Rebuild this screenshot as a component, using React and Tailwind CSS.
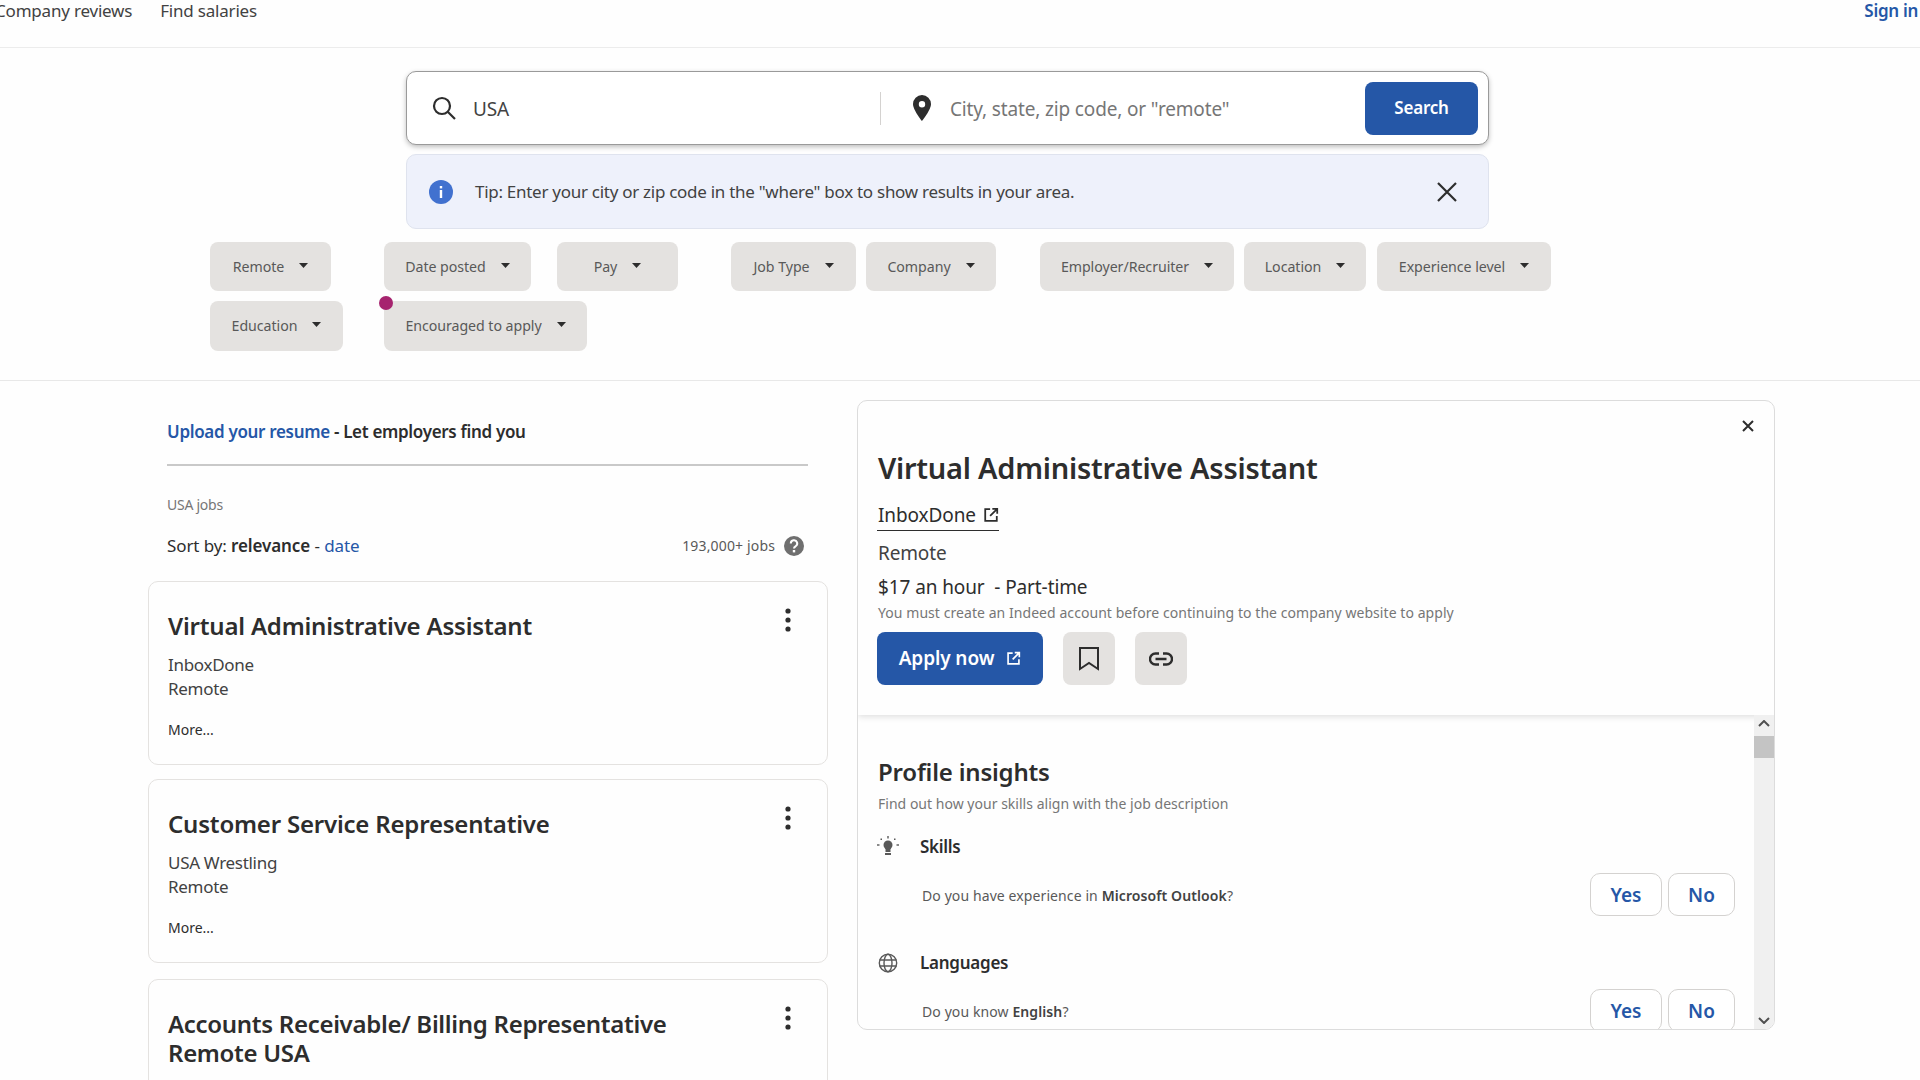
import React from "react";

const Caret = () => (
  <svg width="9" height="5" viewBox="0 0 9 5" className="shrink-0 -mt-[3px]"><path d="M0 0h9L4.5 5z" fill="#2d2d2d" /></svg>
);

const Filter = ({ label, className }) => (
  <button className={`flex items-center justify-center gap-[15px] bg-[#e4e2e0] rounded-[8px] text-[14.2px] text-[#595959] tracking-[-0.05px] ${className}`}>
    <span>{label}</span>
    <Caret />
  </button>
);

const Dots = () => (
  <svg width="8" height="24" viewBox="0 0 8 24" className="shrink-0"><circle cx="4" cy="3" r="2.6" fill="#2d2d2d" /><circle cx="4" cy="12" r="2.6" fill="#2d2d2d" /><circle cx="4" cy="21" r="2.6" fill="#2d2d2d" /></svg>
);

const Card = ({ title, company, more = true, className = "" }) => (
  <div className={`w-[680px] border border-[#e4e2e0] rounded-[10px] shrink-0 px-[19px] pt-[29px] ${className}`}>
    <div className="flex justify-between items-start pr-[16px]">
      <h2 className="text-[24px] leading-[29px] font-semibold text-[#2d2d2d] tracking-[-0.2px] w-[560px]">{title}</h2>
      <div className="-mt-[3px]"><Dots /></div>
    </div>
    {more && (
      <>
        <div className="mt-[13px] text-[17px] leading-[24px] text-[#424242] tracking-[-0.3px]">{company}</div>
        <div className="text-[17px] leading-[24px] text-[#424242] tracking-[-0.3px]">Remote</div>
        <div className="mt-[19px] text-[14px] leading-[20px] text-[#2d2d2d]">More...</div>
      </>
    )}
  </div>
);

const External = ({ size, color, width = 2 }) => (
  <svg width={size} height={size} viewBox="0 0 18 18" fill="none" stroke={color} strokeWidth={width} className="shrink-0">
    <path d="M8 2.5H2.5v13h13V10" />
    <path d="M10.5 2h5.5v5.5M16 2L8 10" />
  </svg>
);

const YesNo = () => (
  <div className="flex gap-[6px] shrink-0">
    <button className="w-[72px] h-[43px] pt-[1px] bg-white border border-[#d4d2d0] rounded-[10px] text-[19px] font-semibold text-[#2557a7]">Yes</button>
    <button className="w-[67px] h-[43px] pt-[1px] bg-white border border-[#d4d2d0] rounded-[10px] text-[19px] font-semibold text-[#2557a7]">No</button>
  </div>
);

export default function App() {
  return (
    <div className="h-screen w-full overflow-hidden bg-[#fefefe] font-['Noto_Sans','Open_Sans',sans-serif]">
      <header className="h-[48px] border-b border-[#ececec] flex justify-between items-start pr-[2px]">
        <nav className="flex gap-[28px] -ml-[5px] text-[17px] leading-[22px] text-[#424242] tracking-[-0.2px]">
          <span>Company reviews</span>
          <span>Find salaries</span>
        </nav>
        <span className="text-[17px] leading-[22px] font-semibold text-[#2557a7] tracking-[-0.3px]">Sign in</span>
      </header>

      <section className="h-[333px] border-b border-[#e8e8e8] pt-[23px]">
        <div className="ml-[406px] w-[1083px] h-[74px] bg-white border border-[#9a9a9a] rounded-[10px] shadow-[0_2px_5px_rgba(0,0,0,0.25)] flex items-center">
          <svg width="28" height="28" viewBox="0 0 28 28" fill="none" stroke="#2d2d2d" strokeWidth="2.2" className="ml-[23px] shrink-0">
            <circle cx="12" cy="12" r="8" /><path d="M18 18l7 7" />
          </svg>
          <span className="ml-[15px] w-[407px] pt-[2px] text-[19px] text-[#424242] tracking-[-0.2px]">USA</span>
          <div className="w-px h-[33px] bg-[#d4d2d0]"></div>
          <svg width="20" height="26" viewBox="0 0 20 26" className="ml-[31px] shrink-0">
            <path fillRule="evenodd" d="M10 0a9 9 0 0 1 9 9c0 6-9 17-9 17S1 15 1 9a9 9 0 0 1 9-9zm0 6a3.2 3.2 0 1 0 0 6.400a3.200 3.200 0 0 0 0-6.400z" fill="#2d2d2d" />
          </svg>
          <span className="ml-[18px] w-[415px] pt-[2px] text-[19px] text-[#767676] tracking-[-0.15px]">City, state, zip code, or "remote"</span>
          <button className="w-[113px] h-[53px] rounded-[8px] bg-[#2557a7] text-white text-[17px] font-semibold tracking-[-0.2px]">Search</button>
        </div>

        <div className="ml-[406px] mt-[9px] w-[1083px] h-[75px] bg-[#eef1fb] border border-[#dfe3ee] rounded-[10px] flex items-center">
          <svg width="24" height="24" viewBox="0 0 24 24" className="ml-[22px] shrink-0">
            <circle cx="12" cy="12" r="12" fill="#4171cf" />
            <rect x="10.800" y="10" width="2.400" height="8" fill="#fff" />
            <rect x="10.800" y="6" width="2.400" height="2.400" fill="#fff" />
          </svg>
          <span className="ml-[22px] w-[962px] text-[17px] text-[#424242] tracking-[-0.28px]">Tip: Enter your city or zip code in the "where" box to show results in your area.</span>
          <svg width="20" height="20" viewBox="0 0 20 20" fill="none" stroke="#2d2d2d" strokeWidth="2.200" className="shrink-0">
            <path d="M1 1l18 18M19 1L1 19" />
          </svg>
        </div>

        <div className="flex mt-[13px] ml-[210px] h-[49px]">
          <Filter label="Remote" className="w-[121px] h-[49px] pt-[1px]" />
          <Filter label="Date posted" className="w-[147px] h-[49px] pt-[1px] ml-[53px]" />
          <Filter label="Pay" className="w-[121px] h-[49px] pt-[1px] ml-[26px]" />
          <Filter label="Job Type" className="w-[125px] h-[49px] pt-[1px] ml-[53px]" />
          <Filter label="Company" className="w-[130px] h-[49px] pt-[1px] ml-[10px]" />
          <Filter label="Employer/Recruiter" className="w-[194px] h-[49px] pt-[1px] ml-[44px]" />
          <Filter label="Location" className="w-[122px] h-[49px] pt-[1px] ml-[10px]" />
          <Filter label="Experience level" className="w-[174px] h-[49px] pt-[1px] ml-[11px]" />
        </div>
        <div className="flex mt-[10px] ml-[210px] h-[50px]">
          <Filter label="Education" className="w-[133px] h-[50px] pb-[1px]" />
          <div className="relative ml-[41px]">
            <Filter label="Encouraged to apply" className="w-[203px] h-[50px] pb-[1px]" />
            <span className="absolute -left-[5px] -top-[5px] w-[14px] h-[14px] rounded-full bg-[#a6246f]"></span>
          </div>
        </div>
      </section>

      <main className="flex items-start">
        <div className="ml-[148px] w-[680px] shrink-0 flex flex-col">
          <div className="ml-[19px] mt-[39px] text-[17px] leading-[24px] font-semibold text-[#2d2d2d] tracking-[-0.32px]">
            <span className="text-[#2557a7]">Upload your resume</span> - Let employers find you
          </div>
          <div className="ml-[19px] mt-[20px] w-[641px] h-[2px] bg-[#c9c9c9]"></div>
          <div className="ml-[19px] mt-[29px] text-[14px] leading-[20px] text-[#767676] tracking-[-0.25px]">USA jobs</div>
          <div className="ml-[19px] w-[641px] mt-[19px] flex items-center justify-between leading-[24px]">
            <div className="text-[17px] text-[#2d2d2d] tracking-[-0.1px]">Sort by: <b className="font-semibold">relevance</b> - <span className="text-[#2557a7]">date</span></div>
            <div className="flex items-center gap-[9px] pr-[4px] text-[14px] text-[#595959] tracking-[0.15px]">
              <span>193,000+ jobs</span>
              <svg width="20" height="20" viewBox="0 0 20 20">
                <circle cx="10" cy="10" r="10" fill="#6f6f6f" />
                <path d="M6.800 7.500a3.200 3.200 0 1 1 4.700 2.800c-1 .6-1.500 1-1.500 2.200" fill="none" stroke="#fff" strokeWidth="2" />
                <rect x="8.800" y="14" width="2.400" height="2.400" fill="#fff" />
              </svg>
            </div>
          </div>
          <Card className="mt-[23px] h-[184px]" title="Virtual Administrative Assistant" company="InboxDone" />
          <Card className="mt-[14px] h-[184px]" title="Customer Service Representative" company="USA Wrestling" />
          <Card className="mt-[16px] h-[140px]" title={<span className="tracking-[-0.3px]">Accounts Receivable/ Billing Representative<br />Remote USA</span>} more={false} />
        </div>

        <aside className="relative ml-[29px] mt-[19px] w-[918px] h-[630px] shrink-0 border border-[#dcdcdc] rounded-[10px] overflow-hidden flex flex-col bg-[#fefefe]">
          <svg width="12" height="12" viewBox="0 0 12 12" fill="none" stroke="#2d2d2d" strokeWidth="2" className="absolute right-[20px] top-[19px]"><path d="M1 1l10 10M11 1L1 11" /></svg>
          <div className="h-[314px] shrink-0 pl-[20px] pr-[19px] pt-[48px] shadow-[0_2px_6px_rgba(0,0,0,0.12)] relative">
            <h1 className="text-[29px] leading-[38px] font-semibold text-[#2d2d2d] tracking-[-0.25px]">Virtual Administrative Assistant</h1>
            <div className="mt-[13px] -ml-px pl-px inline-flex items-center gap-[7px] h-[31px] border-b border-[#2d2d2d] text-[19px] text-[#2d2d2d] tracking-[-0.1px]">
              InboxDone <External size={16} color="#2d2d2d" />
            </div>
            <div className="mt-[9px] text-[19px] leading-[26px] text-[#424242] tracking-[-0.15px]">Remote</div>
            <div className="mt-[8px] text-[19px] leading-[26px] text-[#2d2d2d] tracking-[-0.1px]">$17 an hour &nbsp;- Part-time</div>
            <div className="text-[14px] leading-[26px] text-[#767676] tracking-[0.06px]">You must create an Indeed account before continuing to the company website to apply</div>
            <div className="mt-[6px] -ml-px flex gap-[20px]">
              <button className="w-[166px] h-[53px] rounded-[8px] bg-[#2557a7] text-white text-[19px] font-semibold tracking-[-0.1px] flex items-center justify-center gap-[12px]">
                Apply now <External size={15} color="#fff" />
              </button>
              <button className="w-[52px] h-[53px] rounded-[8px] bg-[#e4e2e0] flex items-center justify-center">
                <svg width="20" height="24" viewBox="0 0 20 24" fill="none" stroke="#2d2d2d" strokeWidth="2"><path d="M1 1h18v21l-9-6-9 6z" /></svg>
              </button>
              <button className="w-[52px] h-[53px] rounded-[8px] bg-[#e4e2e0] flex items-center justify-center">
                <svg width="24" height="14" viewBox="0 0 24 14" fill="none" stroke="#2d2d2d" strokeWidth="2.400"><path d="M10 1.500H6.500a5.500 5.500 0 0 0 0 11H10M14 1.500h3.500a5.500 5.500 0 0 1 0 11H14M6.500 7h11" /></svg>
              </button>
            </div>
          </div>

          <div className="flex flex-1 min-h-0">
            <div className="flex-1 pl-[20px] pr-[19px] overflow-hidden">
              <h2 className="mt-[40px] text-[24px] leading-[34px] font-semibold text-[#2d2d2d] tracking-[-0.2px]">Profile insights</h2>
              <div className="mt-[4px] text-[14px] leading-[22px] text-[#767676] tracking-[0.02px]">Find out how your skills align with the job description</div>
              <div className="mt-[20px] flex items-center h-[24px]">
                <svg width="22" height="22" viewBox="0 0 22 22" className="shrink-0 -mt-[2px] -ml-px" fill="#595959">
                  <circle cx="11" cy="10" r="4.500" /><rect x="8.500" y="13" width="5" height="4" /><rect x="8" y="18" width="6" height="2" />
                  <rect x="10.300" y="1" width="1.400" height="2.500" /><rect x="0" y="9.300" width="2.500" height="1.400" /><rect x="19.500" y="9.300" width="2.500" height="1.400" />
                  <rect x="3.500" y="3.500" width="1.500" height="1.500" /><rect x="17" y="3.500" width="1.500" height="1.500" />
                </svg>
                <span className="ml-[21px] text-[17px] font-semibold text-[#2d2d2d] tracking-[-0.3px]">Skills</span>
              </div>
              <div className="mt-[14px] flex items-center justify-between">
                <span className="ml-[44px] pt-[1px] text-[14px] text-[#595959] tracking-[0.1px]">Do you have experience in <b className="font-semibold text-[#424242]">Microsoft Outlook</b>?</span>
                <YesNo />
              </div>
              <div className="mt-[35px] flex items-center h-[24px]">
                <svg width="20" height="20" viewBox="0 0 20 20" fill="none" stroke="#595959" strokeWidth="1.400" className="shrink-0">
                  <circle cx="10" cy="10" r="8.700" /><ellipse cx="10" cy="10" rx="4" ry="8.700" /><path d="M1.500 7h17M1.500 13h17" />
                </svg>
                <span className="ml-[22px] text-[17px] font-semibold text-[#2d2d2d] tracking-[-0.25px]">Languages</span>
              </div>
              <div className="mt-[14px] flex items-center justify-between">
                <span className="ml-[44px] pt-[1px] text-[14px] text-[#595959] tracking-[0.1px]">Do you know <b className="font-semibold text-[#424242]">English</b>?</span>
                <YesNo />
              </div>
            </div>
            <div className="w-[20px] shrink-0 bg-[#f0f0f0] flex flex-col items-center justify-between py-[5px] relative">
              <svg width="12" height="7" viewBox="0 0 12 7" fill="none" stroke="#505050" strokeWidth="2"><path d="M1 6l5-5 5 5" /></svg>
              <svg width="12" height="7" viewBox="0 0 12 7" fill="none" stroke="#505050" strokeWidth="2"><path d="M1 1l5 5 5-5" /></svg>
              <div className="absolute left-0 top-[21px] w-[20px] h-[22px] bg-[#c4c4c4]"></div>
            </div>
          </div>
        </aside>
      </main>
    </div>
  );
}
